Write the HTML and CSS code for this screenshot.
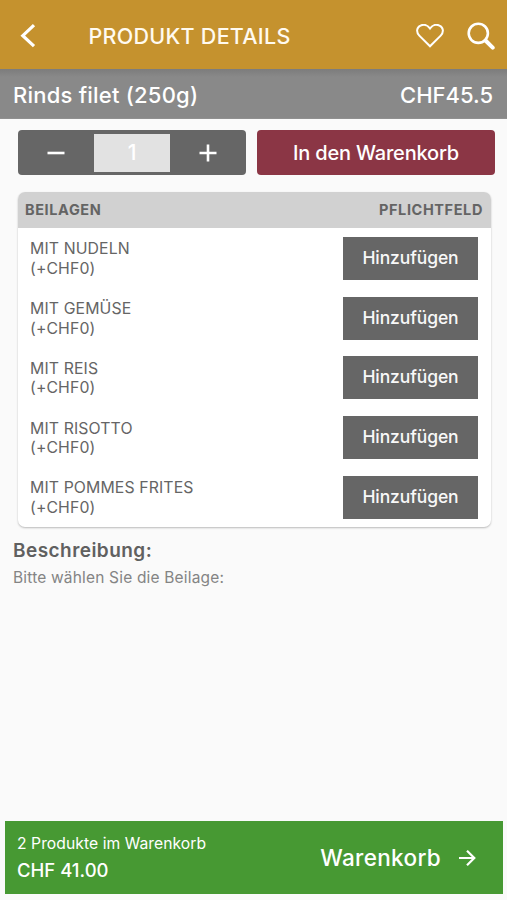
FILE: index.html
```html
<!DOCTYPE html>
<html lang="de">
<head>
<meta charset="utf-8">
<title>Produkt Details</title>
<link rel="stylesheet" href="styles.css">
</head>
<body>
<div class="screen">
  <header class="topbar">
    <svg class="back" viewBox="0 0 16 24"><path d="M14 1.200 2.800 11.700 14 22.200"/></svg>
    <h1 class="title"><span>PRODUKT DETAILS</span></h1>
    <svg class="heart" viewBox="0 0 28 24"><path d="M14 22.300 3.300 11.600C-.2 8 .8 3.200 4.500 1.600 8-.1 11.800 1.100 14 4.500 16.200 1.100 20-.1 23.500 1.600 27.200 3.200 28.200 8 24.700 11.600Z"/></svg>
    <svg class="search" viewBox="0 0 28 28"><circle cx="11.300" cy="11.300" r="9.600"/><path class="handle" d="m18.500 18.500 7.200 7.200"/></svg>
  </header>
  <section class="product"><span class="name">Rinds filet (250g)</span><span class="price">CHF45.5</span></section>
  <main>
    <div class="actions">
      <div class="stepper">
        <button><svg viewBox="0 0 18 18"><path d="M.5 9h17"/></svg></button>
        <div class="count">1</div>
        <button><svg viewBox="0 0 18 18"><path d="M.5 9h17M9 .5v17"/></svg></button>
      </div>
      <button class="add"><span>In den Warenkorb</span></button>
    </div>
    <section class="card">
      <div class="card-head"><span class="side">BEILAGEN</span><span class="required">PFLICHTFELD</span></div>
      <div class="option"><div class="label">MIT NUDELN<br>(+CHF0)</div><button class="pick"><span>Hinzufügen</span></button></div>
      <div class="option"><div class="label">MIT GEMÜSE<br>(+CHF0)</div><button class="pick"><span>Hinzufügen</span></button></div>
      <div class="option"><div class="label">MIT REIS<br>(+CHF0)</div><button class="pick"><span>Hinzufügen</span></button></div>
      <div class="option"><div class="label">MIT RISOTTO<br>(+CHF0)</div><button class="pick"><span>Hinzufügen</span></button></div>
      <div class="option"><div class="label">MIT POMMES FRITES<br>(+CHF0)</div><button class="pick"><span>Hinzufügen</span></button></div>
    </section>
    <h2 class="desc-title">Beschreibung:</h2>
    <p class="desc">Bitte wählen Sie die Beilage:</p>
  </main>
  <footer class="cart">
    <div class="summary"><div class="items">2 Produkte im Warenkorb</div><div class="total">CHF 41.00</div></div>
    <span class="go">Warenkorb</span>
    <svg class="arrow" viewBox="0 0 18 18"><path d="M1 9h15M9 1.700 16.300 9 9 16.300"/></svg>
  </footer>
</div>
</body>
</html>
```
FILE: styles.css
```css
* { box-sizing: border-box; }
body { margin: 0; background: #fafafa; font-family: Inter, "Liberation Sans", sans-serif; }
h1, h2, p { margin: 0; }
button { border: 0; padding: 0; font-family: inherit; color: #fff; }
svg { display: block; fill: none; stroke: #fff; flex: none; }
span { white-space: nowrap; }

.screen { height: 900px; display: flex; flex-direction: column; }

.topbar { height: 69px; display: flex; align-items: center; background: #c5922e; padding: 2px 12px 0 20px; }
.back { width: 16px; height: 24px; stroke-width: 3.2; }
.title { flex: 1; margin-left: 52.500px; font-size: 21.500px; line-height: 26px; font-weight: 500; letter-spacing: .27px; color: #fffaf0; }
.heart { width: 28px; height: 24px; stroke-width: 2; margin-right: 23px; }
.search { width: 28px; height: 28px; stroke-width: 2.600; }
.handle { stroke-width: 4; stroke-linecap: round; }

.product { height: 50px; display: flex; justify-content: space-between; align-items: center; padding: 2px 14px 0 13px; background: linear-gradient(#7c7c7c, #898989 8px); border-bottom: 1px solid #909090; color: #fff; font-size: 22px; font-weight: 500; }
.name { letter-spacing: .22px; }

main { flex: 1; padding: 11px 12px 0 18px; }
.actions { display: flex; gap: 11px; }
.stepper { width: 228px; height: 45px; display: grid; grid-template-columns: 1fr 1fr 1fr; align-items: center; background: #666; border-radius: 4px; }
.stepper button { height: 45px; background: none; display: grid; place-items: center; }
.stepper svg { width: 18px; height: 18px; stroke-width: 2.600; }
.count { height: 38px; background: #e2e2e2; color: #fff; font-size: 21px; line-height: 38px; text-align: center; font-weight: 500; }
.add { flex: 1; height: 45px; background: #8b3645; border-radius: 4px; font-size: 20px; font-weight: 500; letter-spacing: -.2px; }

.card { width: 473px; height: 335px; margin-top: 17px; background: #fff; border-radius: 7px; box-shadow: 0 1px 2px rgba(0, 0, 0, .26); overflow: hidden; }
.card-head { height: 36px; display: flex; align-items: center; justify-content: space-between; padding: 0 8px 2px 7px; background: #d1d1d1; color: #646464; font-size: 14.500px; font-weight: 700; letter-spacing: .6px; }
.option { height: 59.800px; display: flex; align-items: center; justify-content: space-between; padding: 1px 13px 0 12px; }
.label { font-size: 15.800px; line-height: 19.700px; letter-spacing: .12px; color: #656565; padding-top: 1px; }
.pick { width: 135px; height: 43px; background: #666; font-size: 17.500px; font-weight: 500; letter-spacing: -.1px; color: #f8f8f8; padding-bottom: 2px; }
.desc-title { margin: 12px 0 0 -5px; font-size: 19px; line-height: 24px; font-weight: 600; letter-spacing: .45px; color: #606060; }
.desc { margin: 5px 0 0 -5px; font-size: 15.500px; line-height: 20px; letter-spacing: .18px; color: #848484; }

.cart { height: 73px; margin: 0 4px 6px 5px; padding: 0 27px 0 12px; display: flex; align-items: center; background: #479933; color: #fff; }
.summary { flex: 1; }
.items { font-size: 15.700px; line-height: 22px; letter-spacing: .05px; }
.total { font-size: 18.500px; line-height: 24px; margin-top: 3px; font-weight: 500; }
.go { font-size: 22.500px; font-weight: 500; letter-spacing: .33px; margin-right: 17px; }
.arrow { width: 18px; height: 18px; stroke-width: 2.200; }
```
